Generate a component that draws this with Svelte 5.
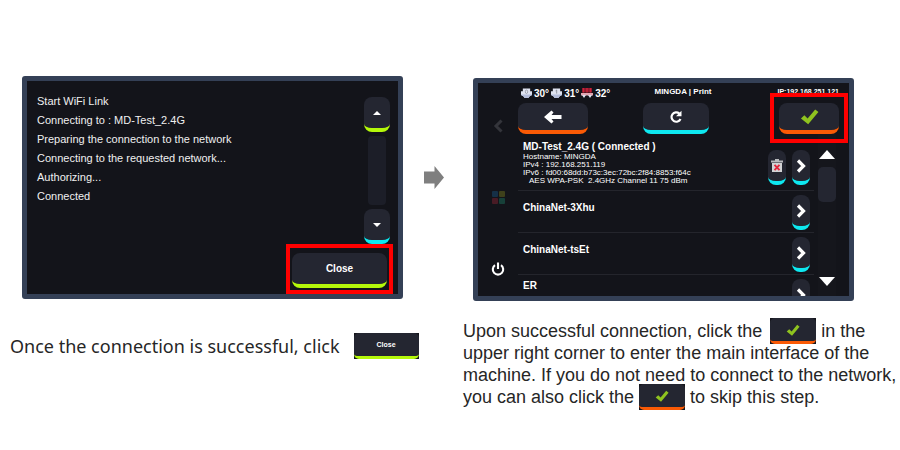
<script>
  const log = [
    'Start WiFi Link',
    'Connecting to : MD-Test_2.4G',
    'Preparing the connection to the network',
    'Connecting to the requested network...',
    'Authorizing...',
    'Connected'
  ];
  const networks = ['ChinaNet-3Xhu', 'ChinaNet-tsEt', 'ER'];
</script>

{#snippet check(size)}
  <svg width={size} height={size} viewBox="0 0 20 20" aria-hidden="true">
    <path d="M1 12.2 4.6 8.8 8 12 16 2.6 19.4 5.2 8.6 18.2Z" fill="#8fc31f" />
  </svg>
{/snippet}

{#snippet chevron()}
  <svg width="10" height="14" viewBox="0 0 10 14" aria-hidden="true">
    <path d="M2 1.5 7.5 7 2 12.5" fill="none" stroke="#fff" stroke-width="3.2" />
  </svg>
{/snippet}

{#snippet extruder(n)}
  <svg width="11" height="11" viewBox="0 0 12 11" aria-hidden="true">
    <path d="M2 0H10V3H12V7L9.500 8.500 8 10.500H4L2.500 8.500 0 7V3H2Z" fill="#dfe3f0" />
    <path d="M0 6.500H12V7L9.500 8.500 8 10.500H4L2.500 8.500 0 7Z" fill="#b4bddb" />
    {#if n === 0}
      <ellipse cx="6" cy="3.6" rx="1.3" ry="1.9" fill="none" stroke="#777b88" stroke-width=".6" />
    {:else}
      <path d="M5 2.600 6.200 1.700V5.600" fill="none" stroke="#777b88" stroke-width=".8" />
    {/if}
  </svg>
{/snippet}

<main>
  <div class="screens">
    <section class="screen" aria-label="WiFi link">
      <div class="log-area">
        <ul class="log">
          {#each log as line}<li>{line}</li>{/each}
        </ul>
        <div class="scroller">
          <button class="key lime step" aria-label="Scroll up">
            <svg width="8" height="4" viewBox="0 0 8 4"><path d="M0 4 4 0 8 4Z" fill="#fff" /></svg>
          </button>
          <div class="track"></div>
          <button class="key cyan step" aria-label="Scroll down">
            <svg width="8" height="4" viewBox="0 0 8 4"><path d="M0 0H8L4 4Z" fill="#fff" /></svg>
          </button>
        </div>
      </div>
      <div class="close-frame">
        <button class="key lime close">Close</button>
      </div>
    </section>

    <svg class="next" width="20" height="23" viewBox="0 0 20 23" aria-hidden="true">
      <path d="M0 5.5H10.500V0L20 11.500 10.500 23V17.500H0Z" fill="#7f7f7f" />
    </svg>

    <section class="screen network" aria-label="Network">
      <nav>
        <button class="icon" aria-label="Previous">
          <svg width="11" height="14" viewBox="0 0 11 14"><path d="M8.500 1.500 3 7 8.500 12.500" fill="none" stroke="#34353b" stroke-width="3" /></svg>
        </button>
        <button class="icon" aria-label="Menu">
          <svg width="13" height="13" viewBox="0 0 13 13">
            <rect width="6" height="6" rx="1" fill="#153047" /><rect x="7" width="6" height="6" rx="1" fill="#3e401b" />
            <rect y="7" width="6" height="6" rx="1" fill="#481b25" /><rect x="7" y="7" width="6" height="6" rx="1" fill="#174039" />
          </svg>
        </button>
        <button class="icon" aria-label="Power">
          <svg width="14" height="14" viewBox="0 0 14 14">
            <path d="M4 3.200A5.200 5.200 0 1 0 10 3.200M7 .5V7" fill="none" stroke="#fff" stroke-width="2.100" />
          </svg>
        </button>
      </nav>

      <div class="content">
        <header>
          <div class="temps">
            {@render extruder(0)}<span>30°</span>
            {@render extruder(1)}<span>31°</span>
            <svg width="12" height="10" viewBox="0 0 12 10" aria-hidden="true">
              <path d="M1 0H11V4.500H1Z" fill="#8d1a2c" />
              <path d="M2.500 0V4.500M6 0V4.500M9.500 0V4.500" stroke="#c9223b" stroke-width="1.400" />
              <path d="M0 5H12V7.500H0Z" fill="#e3a9b5" /><path d="M1 7H5L3 10ZM7 7H11L9 10Z" fill="#dfe3f0" />
            </svg>
            <span>32°</span>
          </div>
          <h1>MINGDA | Print</h1>
          <span class="ip">IP:192.168.251.121</span>
        </header>

        <div class="toolbar">
          <button class="key orange back" aria-label="Back">
            <svg width="18" height="14" viewBox="0 0 18 14"><path d="M0 7 7.500 .5 9.500 2.500 7.500 5H17.500V9H7.500L9.500 11.500 7.500 13.500Z" fill="#fff" /></svg>
          </button>
          <button class="key cyan refresh" aria-label="Refresh">
            <svg width="14" height="14" viewBox="0 0 14 14">
              <path d="M10.300 3.500A4.700 4.700 0 1 0 11.500 9" fill="none" stroke="#fff" stroke-width="2.200" />
              <path d="M12.500 .8V6.300H7Z" fill="#fff" />
            </svg>
          </button>
          <button class="key orange accept" aria-label="Confirm">{@render check(19)}</button>
        </div>

        <div class="list-area">
          <ul class="networks">
            <li class="current">
              <div class="info">
                <h2>MD-Test_2.4G ( Connected )</h2>
                <p>Hostname: MINGDA</p>
                <p>IPv4 : 192.168.251.119</p>
                <p>IPv6 : fd00:68dd:b73c:3ec:72bc:2f84:8853:f64c</p>
                <p class="indent">AES WPA-PSK&nbsp; 2.4GHz Channel 11 75 dBm</p>
              </div>
              <button class="key cyan small" aria-label="Forget MD-Test_2.4G">
                <svg width="12" height="13" viewBox="0 0 12 13">
                  <path d="M4 0H8V1.500H12V3.500H0V1.500H4Z" fill="#b9babd" /><path d="M1 4H11V13H1Z" fill="#d2d3d5" />
                  <path d="M3.500 5.800 8.500 11.200M8.500 5.800 3.500 11.200" stroke="#e2263c" stroke-width="1.900" />
                </svg>
              </button>
              <button class="key cyan small" aria-label="Open MD-Test_2.4G">{@render chevron()}</button>
            </li>
            {#each networks as name}
              <li>
                <h2 class="info">{name}</h2>
                <button class="key cyan small" aria-label="Open {name}">{@render chevron()}</button>
              </li>
            {/each}
          </ul>
          <div class="rail">
            <svg width="16" height="9" viewBox="0 0 16 9" aria-hidden="true"><path d="M0 9 8 0 16 9Z" fill="#fff" /></svg>
            <div class="thumb"></div>
            <svg width="16" height="9" viewBox="0 0 16 9" aria-hidden="true"><path d="M0 0H16L8 9Z" fill="#fff" /></svg>
          </div>
        </div>
      </div>
    </section>
  </div>

  <div class="captions">
    <p class="first"><span>Once the connection is successful, click</span><span class="chip chip-close"><span class="key lime">Close</span></span></p>
    <p class="second">
      Upon successful connection, click the <span class="chip chip-check lead"><span class="key orange">{@render check(14)}</span></span> in the<br />
      upper right corner to enter the main interface of the<br />
      machine. If you do not need to connect to the network,<br />
      you can also click the <span class="chip chip-check"><span class="key orange">{@render check(14)}</span></span> to skip this step.
    </p>
  </div>
</main>

<style>
  :global(body) { margin: 0; background: #fff; }
  main { padding: 76px 0 24px; font-family: "Liberation Sans", Arial, sans-serif; }
  ul, p, h1, h2 { margin: 0; padding: 0; list-style: none; }
  svg { display: block; flex: none; }

  .screens { display: grid; grid-template-columns: 1fr 70px 1fr; padding: 0 46px 0 22px; align-items: start; }
  .screen {
    box-sizing: border-box; min-width: 0; min-height: 223px; display: flex; flex-direction: column;
    border: 5px solid #344056; border-radius: 3px; background: #13141a; color: #fff; overflow: hidden;
  }
  .next { justify-self: center; margin: 90px 8px 0 0; }

  .key {
    box-sizing: border-box; display: flex; align-items: center; justify-content: center;
    margin: 0; padding: 0; border: 0 solid; border-bottom-width: 4px; border-radius: 8px;
    background: #242631; background-clip: padding-box; color: #fff; font: bold 10px "Liberation Sans", Arial, sans-serif;
  }
  .key.lime { border-color: #b4f80a; }
  .key.cyan { border-color: #0ee8f0; }
  .key.orange { border-color: #fa5a05; }

  .log-area { flex: 1; display: flex; justify-content: space-between; padding: 11px 8px 0 10px; }
  .log { font-size: 11px; line-height: 19px; color: #f0f0f0; }
  .scroller { display: flex; flex-direction: column; align-items: center; padding-top: 5px; }
  .step { width: 26px; height: 35px; }
  .track { width: 18px; height: 69px; margin: 4px 0; border-radius: 4px; background: #1c1e28; }
  .close-frame { align-self: flex-end; margin-right: 5px; padding: 5px 2px 2px; border: 4px solid #f00; }
  .close { width: 95px; height: 35px; }

  .network { flex-direction: row; margin-top: 2px; }
  nav { width: 40px; display: flex; flex-direction: column; align-items: center; justify-content: space-between; padding: 36px 0 20px; box-sizing: border-box; }
  .icon { margin: 0; padding: 0; border: 0; background: none; }
  .content { flex: 1; min-width: 0; }
  header { display: grid; grid-template-columns: 1fr auto 1fr; align-items: center; height: 20px; padding: 0 10px 0 3px; font-weight: bold; font-size: 7px; }
  h1 { font-size: 8px; padding: 0 0 3px 6px; }
  .temps { display: flex; align-items: center; gap: 2px; font-size: 10px; }
  .ip { justify-self: end; padding-bottom: 3px; }
  .toolbar { display: flex; justify-content: space-between; padding-right: 10px; }
  .toolbar .key { height: 31px; }
  .back { width: 70px; }
  .refresh { width: 66px; margin-right: 16px; }
  .accept { position: relative; width: 60px; }
  .accept::after { content: ""; position: absolute; inset: -10px -9px -13px; border: 4px solid #f00; }

  .list-area { display: flex; height: 162px; padding-right: 13px; gap: 4px; }
  .networks { flex: 1; overflow: hidden; }
  .networks li { box-sizing: border-box; height: 42px; display: flex; align-items: flex-start; gap: 6px; padding: 4px 4px 0 5px; border-bottom: 1px solid #24252c; }
  .networks .current { height: 57px; padding-top: 16px; }
  .info { flex: 1; min-width: 0; }
  h2 { font-size: 10px; line-height: 12px; }
  h2.info { padding-top: 7px; }
  li:last-child h2.info { padding-top: 1px; }
  .current .info { margin-top: -9px; }
  .current p { font-size: 8px; line-height: 8px; white-space: nowrap; }
  .current .indent { padding-left: 6px; }
  .small { flex: none; width: 18px; height: 35px; }
  .rail { width: 18px; display: flex; flex-direction: column; align-items: center; padding: 16px 0 10px; box-sizing: border-box; background: #15161c; }
  .thumb { width: 18px; height: 35px; margin: 8px 0 auto; border-radius: 5px; background: #242631; }

  .captions { display: grid; grid-template-columns: 1fr 1fr; column-gap: 16px; padding-left: 10px; margin-top: 19px; color: #262626; white-space: nowrap; }
  .first { align-self: start; display: flex; align-items: center; gap: 14px; padding-top: 12px; font: 18px/28px "Noto Sans", "Open Sans", sans-serif; }
  .second { font-size: 18px; line-height: 22px; }
  .chip { display: inline-block; vertical-align: top; background: #15161c; }
  .chip .key { height: 100%; border-bottom-width: 3px; border-radius: 5px; font-size: 7px; }
  .chip-close { width: 65px; height: 26px; }
  .chip-check { width: 46px; height: 26px; margin: -2px 0; }
  .lead { margin-left: 3px; }
</style>
